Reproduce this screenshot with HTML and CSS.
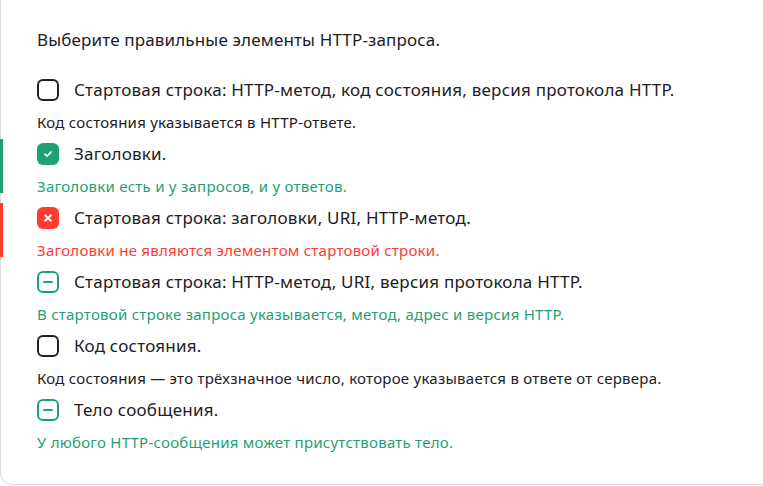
FILE: index.html
```html
<!DOCTYPE html>
<html lang="ru">
<head>
<meta charset="utf-8">
<title>Quiz</title>
<link rel="stylesheet" href="styles.css">
</head>
<body>
<div class="card">
  <p class="question">Выберите правильные элементы HTTP-запроса.</p>
  <ul class="options">
    <li class="option">
      <div class="row"><span class="box box--empty"></span><span class="label">Стартовая строка: HTTP-метод, код состояния, версия протокола HTTP.</span></div>
      <p class="hint">Код состояния указывается в HTTP-ответе.</p>
    </li>
    <li class="option option--correct">
      <div class="row"><span class="box box--ok"><svg width="10" height="8" viewBox="0 0 10 8"><path d="M2 4.3 L4 6.1 L8 2.1" fill="none" stroke="#fff" stroke-width="1.8" stroke-linecap="round" stroke-linejoin="round"/></svg></span><span class="label">Заголовки.</span></div>
      <p class="hint hint--green">Заголовки есть и у запросов, и у ответов.</p>
    </li>
    <li class="option option--wrong">
      <div class="row"><span class="box box--bad"><svg width="10" height="10" viewBox="0 0 10 10"><path d="M2.2 2.2 L7.8 7.8 M7.8 2.2 L2.2 7.8" fill="none" stroke="#fff" stroke-width="2" stroke-linecap="round"/></svg></span><span class="label">Стартовая строка: заголовки, URI, HTTP-метод.</span></div>
      <p class="hint hint--red">Заголовки не являются элементом стартовой строки.</p>
    </li>
    <li class="option">
      <div class="row"><span class="box box--missed"><span class="dash"></span></span><span class="label">Стартовая строка: HTTP-метод, URI, версия протокола HTTP.</span></div>
      <p class="hint hint--green">В стартовой строке запроса указывается, метод, адрес и версия HTTP.</p>
    </li>
    <li class="option">
      <div class="row"><span class="box box--empty"></span><span class="label">Код состояния.</span></div>
      <p class="hint">Код состояния — это трёхзначное число, которое указывается в ответе от сервера.</p>
    </li>
    <li class="option">
      <div class="row"><span class="box box--missed"><span class="dash"></span></span><span class="label">Тело сообщения.</span></div>
      <p class="hint hint--green">У любого HTTP-сообщения может присутствовать тело.</p>
    </li>
  </ul>
</div>
</body>
</html>
```

FILE: styles.css
```css
* { box-sizing: border-box; }
html, body { margin: 0; padding: 0; background: #fff; }
body {
  font-family: "Noto Sans", "Open Sans", sans-serif;
  color: #21201f;
  height: 486px;
  overflow: hidden;
}
.card {
  margin-top: -20px;
  width: 780px;
  height: 505px;
  border: 1px solid #dcdcdc;
  border-radius: 12px;
  padding: 47px 0 0 36px;
}
.question {
  margin: 0;
  font-size: 17px;
  line-height: 24px;
  letter-spacing: 0.15px;
}
.options {
  list-style: none;
  margin: 26px 0 0;
  padding: 0;
  display: flex;
  flex-direction: column;
  gap: 10px;
}
.option { position: relative; }
.option--correct::before,
.option--wrong::before {
  content: "";
  position: absolute;
  left: -37px;
  top: -3px;
  width: 3px;
  height: 54px;
}
.option--correct::before { background: #1f9f74; }
.option--wrong::before { background: #ff3b30; }
.row {
  display: flex;
  align-items: center;
  height: 24px;
  gap: 15px;
}
.label {
  font-size: 17px;
  line-height: 24px;
  letter-spacing: 0.22px;
}
.box {
  width: 22px;
  height: 22px;
  border-radius: 6px;
  flex: none;
  display: flex;
  align-items: center;
  justify-content: center;
}
.box--empty { border: 2px solid #21201f; }
.box--ok { background: #1f9f74; }
.box--bad { background: #ff3b30; }
.box--missed { border: 2px solid #1f9f74; }
.dash {
  width: 10px;
  height: 2px;
  background: #1f9f74;
  border-radius: 1px;
}
.hint {
  margin: 10px 0 0;
  font-size: 15px;
  line-height: 20px;
  letter-spacing: 0.25px;
}
.hint--green { color: #1f9f74; }
.hint--red { color: #ff3b30; }
```
